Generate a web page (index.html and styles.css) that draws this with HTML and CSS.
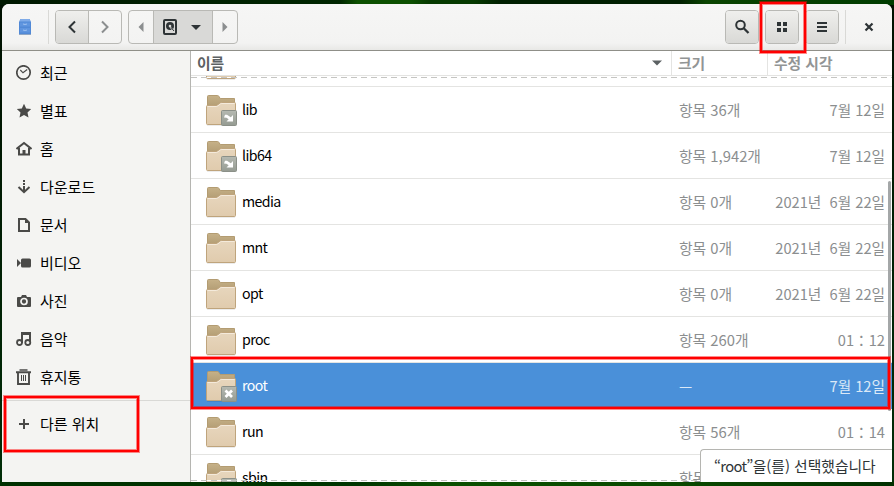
FILE: index.html
```html
<!DOCTYPE html>
<html lang="ko">
<head>
<meta charset="utf-8">
<title>파일</title>
<link rel="stylesheet" href="styles.css">
</head>
<body>
<svg class="defs" width="0" height="0">
  <defs>
    <linearGradient id="back" x1="0" y1="0" x2="0" y2="1"><stop offset="0" stop-color="#c6b188"/><stop offset=".4" stop-color="#b39d74"/></linearGradient>
    <linearGradient id="front" x1="0" y1="0" x2="0" y2="1"><stop offset="0" stop-color="#e7d6bd"/><stop offset="1" stop-color="#e0cbad"/></linearGradient>
    <linearGradient id="emb" x1="0" y1="0" x2="0" y2="1"><stop offset="0" stop-color="#b5b9b1"/><stop offset="1" stop-color="#959b92"/></linearGradient>
    <symbol id="folder" viewBox="0 0 32 32">
      <path d="M2 31h28" stroke="#000" stroke-opacity=".15"/>
      <path d="M2.500 29V2.500q0-1 1-1h9q1 0 1.500 1l1.200 2H29.500V29z" fill="url(#back)" stroke="#b39c72"/>
      <path d="M1.500 29.500V12.500q0-1 1-1h8.500q1 0 1.800-.7l2-1.600q.7-.7 1.700-.7h13q1 0 1 1v20q0 1-1 1h-27q-1 0-1-1z" fill="url(#front)" stroke="#bfa47c"/>
      <path d="M2.500 12.500h8.700q1 0 1.800-.7l2.300-1.800q.6-.5 1.500-.5h12.700" fill="none" stroke="#f4eadb"/>
    </symbol>
    <symbol id="link" viewBox="0 0 16 16">
      <rect x=".5" y=".5" width="15" height="15" rx="1" fill="url(#emb)" stroke="#8b9088"/>
      <path d="M12 5v6.500H5.500l2.200-2.300L5.500 7.800 3 7.500 4 4.700h2l3.800 2.500z" fill="#fff"/>
    </symbol>
    <symbol id="locked" viewBox="0 0 16 16">
      <rect x=".5" y=".5" width="15" height="15" rx="1" fill="url(#emb)" stroke="#8b9088"/>
      <path d="M4.500 4.500l6.500 6.500M11 4.500L4.500 11" stroke="#fff" stroke-width="2.700"/>
    </symbol>
  </defs>
</svg>

<div class="window">
  <header class="headerbar">
    <svg class="app" width="12" height="16" viewBox="0 0 12 16"><path d="M1.500 0h9l1.500 3v12H0V3z" fill="#5189d6"/><path d="M1.500 0h9l1 2.500H.5z" fill="#7fabe8"/><path d="M1 3.500h10v4H1zM1 9h10v4.500H1z" fill="#5f95df"/><path d="M4 5q2 1 4 0M4 11q2 1 4 0" fill="none" stroke="#9dc1f0"/><path d="M0 15.500h12" stroke="#8fa6c4"/></svg>
    <i class="sep"></i>
    <div class="group nav">
      <span class="btn raised"><svg width="16" height="16"><path d="M11 2.500L5.500 8l5.500 5.500" fill="none" stroke="#2e3436" stroke-width="2"/></svg></span>
      <span class="btn"><svg width="16" height="16"><path d="M5 2.500L10.500 8l-5.500 5.500" fill="none" stroke="#8b8e8f" stroke-width="2"/></svg></span>
    </div>
    <div class="group path">
      <span class="btn slim"><svg width="16" height="16"><path d="M10.500 3v10L5.500 8z" fill="#8b8e8f"/></svg></span>
      <span class="btn disk">
        <svg width="16" height="16"><rect x="2" y="1" width="12" height="14" rx="1" fill="none" stroke="#2e3436" stroke-width="2"/><circle cx="8" cy="7" r="4" fill="#2e3436"/><circle cx="8" cy="7" r="1.300" fill="#d9d9d7"/><path d="M8 8l4 4" stroke="#d9d9d7" stroke-width="1.500"/><path d="M9 8.500l3 3.500" stroke="#2e3436"/></svg>
        <svg width="16" height="16"><path d="M3 6h10l-5 5z" fill="#2e3436"/></svg>
      </span>
      <span class="btn slim"><svg width="16" height="16"><path d="M5.500 3v10l5-5z" fill="#8b8e8f"/></svg></span>
    </div>
    <div class="group tool search"><span class="btn raised"><svg width="16" height="16"><circle cx="6.500" cy="6" r="4.300" fill="none" stroke="#2e3436" stroke-width="2"/><path d="M9.500 9l5 5" stroke="#2e3436" stroke-width="2.300"/></svg></span></div>
    <div class="group tool"><span class="btn raised"><svg width="16" height="16" fill="#2e3436"><path d="M3 3h4v4H3zM9 3h4v4H9zM3 9h4v4H3zM9 9h4v4H9z"/></svg></span></div>
    <div class="group tool menu"><span class="btn raised"><svg width="16" height="16"><path d="M3 4h10M3 8h10M3 12h10" stroke="#2e3436" stroke-width="2"/></svg></span></div>
    <i class="sep end"></i>
    <svg class="close" width="16" height="16"><path d="M4.500 4.500l7 7M11.500 4.500l-7 7" stroke="#2e3436" stroke-width="2.200"/></svg>
  </header>

  <div class="body">
    <nav class="sidebar">
      <a><svg width="16" height="16"><circle cx="7.500" cy="7.500" r="6.700" fill="none" stroke="#4a4a48" stroke-width="1.700"/><path d="M4.300 5L7 7.800L11.200 4.500" fill="none" stroke="#4a4a48" stroke-width="1.200"/></svg>최근</a>
      <a><svg width="16" height="16"><path d="M8 .7l2.200 4.700 5 .6-3.700 3.400 1 5.100L8 12l-4.500 2.500 1-5.100L.8 6l5-.6z" fill="#4a4a48"/></svg>별표</a>
      <a><svg width="16" height="16"><path d="M.5 8L8 2l7.500 6M3 7v6.500h10V7" fill="none" stroke="#4a4a48" stroke-width="2"/><path d="M6.500 13V9h3v4z" fill="#4a4a48"/></svg>홈</a>
      <a><svg width="16" height="16"><path d="M8 1v2M8 4v2M8 7v5M2.500 8L8 13.200L13.500 8" fill="none" stroke="#4a4a48" stroke-width="2"/></svg>다운로드</a>
      <a><svg width="16" height="16"><path d="M3 2h6.500L13 5.500V14H3z" fill="none" stroke="#4a4a48" stroke-width="2"/><path d="M9 2v4h4z" fill="#4a4a48"/></svg>문서</a>
      <a><svg width="16" height="16"><path d="M1 4l4 4-4 4zM5 5q0-1.500 1.500-1.500h7Q15 3.500 15 5v6q0 1.500-1.500 1.500h-7Q5 12.500 5 11z" fill="#4a4a48"/></svg>비디오</a>
      <a><svg width="16" height="16"><path d="M2 4h3l1-2h4l1 2h3q1 0 1 1v8q0 1-1 1H2q-1 0-1-1V5q0-1 1-1z" fill="#4a4a48"/><circle cx="8" cy="8.500" r="3" fill="none" stroke="#f4f4f2" stroke-width="1.700"/></svg>사진</a>
      <a><svg width="16" height="16"><path d="M6 12V2h8v9M6 3h8" fill="none" stroke="#4a4a48" stroke-width="2"/><circle cx="3.500" cy="11.500" r="2.500" fill="none" stroke="#4a4a48" stroke-width="1.800"/><circle cx="11.800" cy="11.500" r="2.500" fill="none" stroke="#4a4a48" stroke-width="1.800"/></svg>음악</a>
      <a><svg width="16" height="16"><path d="M0 3.200h15M2 3.500V15h11V3.500" fill="none" stroke="#4a4a48" stroke-width="1.900"/><path d="M3.500 1h8" stroke="#4a4a48" stroke-width="1.500"/><path d="M5.500 6v6M7.500 6v6M9.500 6v6" stroke="#4a4a48"/></svg>휴지통</a>
      <a class="other"><svg width="16" height="16"><path d="M3 8h10M8 3v10" stroke="#4a4a48" stroke-width="2"/></svg>다른 위치</a>
    </nav>

    <main class="files">
      <div class="cols"><b class="name">이름<svg width="16" height="16"><path d="M3 5.500h10l-5 5z" fill="#5c6163"/></svg></b><b>크기</b><b>수정 시각</b></div>
      <div class="list">
        <div class="row clipped"><span class="icon"><svg><use href="#folder"/></svg></span></div>
        <div class="row"><span class="icon"><svg><use href="#folder"/></svg><svg class="emblem"><use href="#link"/></svg></span><span class="label">lib</span><span class="size">항목 36개</span><span class="date">7월 12일</span></div>
        <div class="row"><span class="icon"><svg><use href="#folder"/></svg><svg class="emblem"><use href="#link"/></svg></span><span class="label">lib64</span><span class="size">항목 1,942개</span><span class="date">7월 12일</span></div>
        <div class="row"><span class="icon"><svg><use href="#folder"/></svg></span><span class="label">media</span><span class="size">항목 0개</span><span class="date">2021년&nbsp; 6월 22일</span></div>
        <div class="row"><span class="icon"><svg><use href="#folder"/></svg></span><span class="label">mnt</span><span class="size">항목 0개</span><span class="date">2021년&nbsp; 6월 22일</span></div>
        <div class="row"><span class="icon"><svg><use href="#folder"/></svg></span><span class="label">opt</span><span class="size">항목 0개</span><span class="date">2021년&nbsp; 6월 22일</span></div>
        <div class="row"><span class="icon"><svg><use href="#folder"/></svg></span><span class="label">proc</span><span class="size">항목 260개</span><span class="date">01：12</span></div>
        <div class="row selected"><span class="icon"><svg><use href="#folder"/></svg><svg class="emblem"><use href="#locked"/></svg></span><span class="label">root</span><span class="size">—</span><span class="date">7월 12일</span></div>
        <div class="row"><span class="icon"><svg><use href="#folder"/></svg></span><span class="label">run</span><span class="size">항목 56개</span><span class="date">01：14</span></div>
        <div class="row"><span class="icon"><svg><use href="#folder"/></svg><svg class="emblem"><use href="#link"/></svg></span><span class="label">sbin</span><span class="size">항목</span><span class="date"></span></div>
      </div>
      <i class="dash top"></i><i class="dash bottom"></i>
      <i class="scrollbar"></i>
      <div class="status"><span class="quoted">“root”</span>을(를) 선택했습니다</div>
    </main>
  </div>
</div>
<i class="mark mark-view"></i>
<i class="mark mark-root"></i>
<i class="mark mark-other"></i>
</body>
</html>
```
FILE: styles.css
```css
* { box-sizing: border-box; }
body {
  margin: 0;
  width: 894px;
  height: 486px;
  padding: 4px 2px;
  overflow: hidden;
  background:
    linear-gradient(90deg, #001800, #002600 38%, #0c5000 40%, #0c5000 46%, #063a00 48%, #063a00 53%, #001f00 56%, #001f00 76%, #0a4400 79%, #003c00) 0 0 / 100% 5px no-repeat,
    linear-gradient(90deg, #003000, #003600 40%, #0b5000 50%, #0b4a00 75%, #003000) 0 100% / 100% 5px no-repeat,
    linear-gradient(#001000, #002e08);
  font: 14.67px/20px "Noto Sans CJK KR", sans-serif;
  color: #000;
}
svg { display: block; flex: none; }
.defs { position: absolute; }
.window {
  height: 478px;
  border-radius: 7px 7px 0 0;
  overflow: hidden;
  background: #fff;
}
.headerbar {
  height: 47px;
  display: flex;
  align-items: center;
  background: linear-gradient(#f6f6f5, #f3f3f2 85%, #e8e8e6);
  border-bottom: 1px solid #8f8f88;
}
.app { margin-left: 17px; }
.sep { width: 1px; height: 34px; margin-left: 17px; background: #d9d9d6; }
.group {
  height: 34px;
  display: flex;
  border: 1px solid #b9b9b5;
  border-radius: 4px;
  overflow: hidden;
}
.btn { flex: 1; display: flex; align-items: center; justify-content: center; }
.raised { background: linear-gradient(#efefed, #d9d9d6); }
.nav { width: 67px; margin-left: 6px; }
.nav .raised { border-right: 1px solid #b9b9b5; }
.path { width: 110px; margin-left: 6px; }
.slim { flex: 0 0 24px; }
.disk { background: #d9d9d7; border: solid #b9b9b5; border-width: 0 1px; gap: 10px; }
.tool { width: 34px; margin-left: 6px; }
.search { margin-left: auto; }
.end { margin-left: 6px; }
.close { margin: 0 15px 0 15px; }
.body { display: flex; height: 431px; }
.sidebar {
  width: 189px;
  padding-top: 3px;
  background: #f4f4f2;
  border-right: 1px solid #b5b5b1;
  font-size: 15px;
}
.sidebar a { height: 38px; padding-left: 14px; display: flex; align-items: center; gap: 8px; }
.sidebar .other { height: 47px; margin-top: 4px; border-top: 1px solid #d9d9d6; }
.files { position: relative; flex: 1; min-width: 0; overflow: hidden; }
.cols {
  height: 25px;
  display: grid;
  grid-template-columns: 480px 96px 1fr;
  border-bottom: 1px solid #e4e4e2;
  color: #929595;
  font-size: 14.8px;
}
.cols b { padding-left: 6px; line-height: 24px; border-left: 1px solid #e4e4e2; }
.cols .name { display: flex; align-items: center; justify-content: space-between; padding-right: 6px; border: 0; color: #5c6163; }
.row {
  height: 46px;
  padding-left: 14px;
  display: grid;
  grid-template-columns: 37px 437px 84px 122px;
  align-items: center;
  border-bottom: 1px solid #e4e4e2;
  color: #8b8e8f;
}
.clipped { height: 11px; overflow: hidden; align-content: end; }
.clipped .icon { bottom: 6px; }
.icon { position: relative; width: 32px; height: 32px; }
.icon svg { width: 32px; height: 32px; }
.icon .emblem { position: absolute; right: 0; bottom: 0; width: 16px; height: 16px; }
.label { color: #000; font-size: 14.2px; letter-spacing: -0.6px; padding-bottom: 1px; }
.size, .date { white-space: nowrap; }
.size { font-size: 14.8px; }
.date { text-align: right; }
.selected { background: #4a90d9; border-color: #4a90d9; color: #dbe9f7; }
.selected .label { color: #fff; }
.dash {
  position: absolute;
  left: 0;
  right: 0;
  height: 1px;
  background: repeating-linear-gradient(90deg, #c5c5c2 0 6px, #fff 6px 10px);
}
.dash.top { top: 26px; }
.dash.bottom { bottom: 1px; }
.scrollbar { position: absolute; right: 1px; top: 130px; width: 3px; height: 230px; border-radius: 2px; background: #a4a7a8; }
.status {
  position: absolute;
  right: 0;
  bottom: 0;
  width: 192px;
  height: 33px;
  padding-left: 13px;
  border: solid #b5b5b1;
  border-width: 1px 0 0 1px;
  border-radius: 4px 0 0 0;
  background: #fff;
  color: #2e3436;
  font-size: 14.8px;
  line-height: 32px;
  white-space: nowrap;
}
.quoted { letter-spacing: -0.7px; }
.mark { position: absolute; border: 2px solid #f00; box-shadow: 0 0 0 1px rgba(255, 0, 0, .45), inset 0 0 0 1px rgba(255, 0, 0, .45); }
.mark-view { left: 760px; top: 2px; width: 46px; height: 51px; }
.mark-root { left: 191px; top: 357px; width: 699px; height: 52px; }
.mark-other { left: 4px; top: 396px; width: 135px; height: 56px; }
```
